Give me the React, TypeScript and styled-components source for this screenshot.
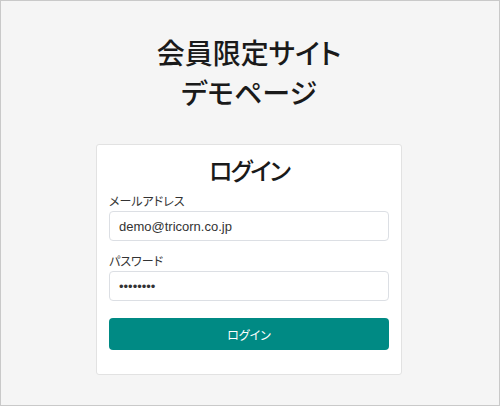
import styled, { createGlobalStyle } from 'styled-components';

const GlobalStyle = createGlobalStyle`
    html, body {
        margin: 0;
        padding: 0;
    }
    body {
        font-family: 'Noto Sans', 'Noto Sans CJK JP', sans-serif;
        font-feature-settings: 'palt';
        color: #212529;
    }
    button, input {
        font-feature-settings: 'palt';
    }
`;

const App = () => (
    <>
        <GlobalStyle />
        <Page>
            <SiteTitle>
                会員限定サイト
                <br />
                デモページ
            </SiteTitle>
            <Card>
                <CardTitle>ログイン</CardTitle>
                <Field>
                    <Label htmlFor="email">メールアドレス</Label>
                    <Input id="email" type="email" defaultValue="demo@tricorn.co.jp" />
                </Field>
                <Field>
                    <Label htmlFor="password">パスワード</Label>
                    <Input id="password" type="password" defaultValue="password" />
                </Field>
                <SubmitButton type="button">ログイン</SubmitButton>
            </Card>
        </Page>
    </>
);

export default App;


const Page = styled.div`
    box-sizing: border-box;
    width: 500px;
    height: 406px;
    border: 1px solid #c9c9c9;
    background-color: #f5f5f5;
    display: flex;
    flex-direction: column;
    align-items: center;
    padding: 31px 2px 0 0;
`;

const SiteTitle = styled.h1`
    margin: 0;
    font-family: 'Noto Sans CJK JP', sans-serif;
    font-size: 28px;
    font-weight: 500;
    line-height: 40px;
    text-align: center;
    color: #1a1a1a;
`;

const Card = styled.div`
    box-sizing: border-box;
    width: 306px;
    margin-top: 32px;
    padding: 8px 12px 24px;
    background-color: #fff;
    border: 1px solid #e2e2e2;
    border-radius: 3px;
    display: flex;
    flex-direction: column;
`;

const CardTitle = styled.h2`
    margin: 0 0 5px;
    font-family: 'Noto Sans CJK JP', sans-serif;
    font-size: 24px;
    font-weight: 500;
    line-height: 34px;
    letter-spacing: -2px;
    text-align: center;
    color: #1a1a1a;
`;

const Field = styled.div`
    display: flex;
    flex-direction: column;
    margin-bottom: 11px;
`;

const Label = styled.label`
    font-family: 'Noto Sans CJK JP', sans-serif;
    font-size: 12px;
    line-height: 17px;
    color: #333;
    margin-bottom: 2px;
`;

const Input = styled.input`
    box-sizing: border-box;
    height: 30px;
    padding: 0 9px;
    border: 1px solid #dcdfe4;
    border-radius: 4px;
    font-family: 'Liberation Sans', Arial, sans-serif;
    font-size: 13px;
    color: #333;
    background: #fff;
    outline: none;
`;

const SubmitButton = styled.button`
    margin-top: 6px;
    height: 32px;
    border: none;
    border-radius: 4px;
    background-color: #008a84;
    color: #fff;
    font-family: 'Noto Sans CJK JP', sans-serif;
    font-size: 12px;
    cursor: pointer;
`;
